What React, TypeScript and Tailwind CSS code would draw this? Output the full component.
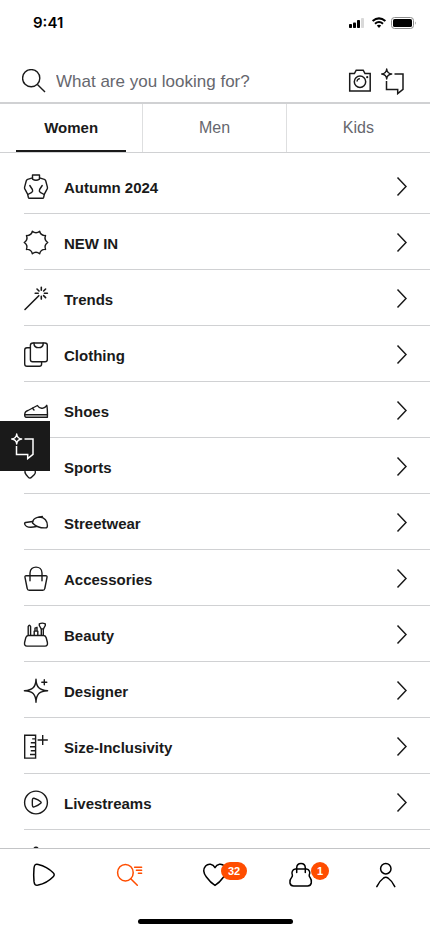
import type { ReactNode } from "react";

type IconProps = { children: ReactNode };

function RowIcon({ children }: IconProps) {
  return (
    <svg
      width="24"
      height="25"
      viewBox="0 -0.5 24 25"
      className="shrink-0 overflow-visible"
      fill="none"
      stroke="currentColor"
      strokeWidth="1.4"
      strokeLinecap="round"
      strokeLinejoin="round"
      aria-hidden="true"
    >
      {children}
    </svg>
  );
}

function NavIcon({ children }: IconProps) {
  return (
    <svg
      width="24"
      height="24"
      viewBox="0 0 24 24"
      className="overflow-visible"
      fill="none"
      stroke="currentColor"
      strokeWidth="1.5"
      strokeLinecap="round"
      strokeLinejoin="round"
      aria-hidden="true"
    >
      {children}
    </svg>
  );
}

function AssistantIcon() {
  return (
    <svg width="28" height="27" viewBox="0 0 28 27" fill="none" stroke="currentColor" strokeWidth="1.5" aria-hidden="true">
      <path d="M5.7 1C6 4.3 7.4 5.7 10.7 6C7.4 6.3 6 7.7 5.7 11C5.4 7.7 4 6.3 0.7 6C4 5.7 5.4 4.3 5.7 1Z" strokeWidth="1.4" strokeLinejoin="round" />
      <path d="M13.5 6H22V21.4L16.7 25.6V21.4H5.5V13" />
    </svg>
  );
}

const point = (radius: number, angle: number) =>
  `${(12 + radius * Math.cos(angle)).toFixed(2)} ${(12 + radius * Math.sin(angle)).toFixed(2)}`;

const sealTips = 10;

const sealPath =
  Array.from({ length: sealTips }, (_, i) => {
    const half = Math.PI / sealTips;
    const a = i * 2 * half;
    return `${i === 0 ? `M${point(11.8, a)}` : ""}Q${point(8.2, a + half)} ${point(11.8, a + half * 2)}`;
  }).join("") + "Z";

const categories: { id: string; label?: string; icon: ReactNode }[] = [
  {
    id: "autumn",
    label: "Autumn 2024",
    icon: (
      <>
        <path d="M8.5 0.5H15.5V4.6C13.5 6 10.5 6 8.5 4.6Z" />
        <path d="M8.5 3.4L3.6 4.9Q2.6 5.3 2.3 6.3L0.6 12.6Q0.4 13.6 0.8 14.4L3.6 19.6L4.4 23Q4.6 23.7 5.3 23.7H18.7Q19.4 23.7 19.6 23L20.4 19.6L23.2 14.4Q23.6 13.6 23.4 12.6L21.7 6.3Q21.4 5.3 20.4 4.9L15.5 3.4" />
        <path d="M5.8 11L8.4 15Q9.2 16.6 7.8 17.8L3.8 20M18.2 11L15.6 15Q14.8 16.6 16.2 17.8L20.2 20" />
      </>
    ),
  },
  { id: "new", label: "NEW IN", icon: <path d={sealPath} /> },
  {
    id: "trends",
    label: "Trends",
    icon: (
      <path
        strokeWidth="1.6"
        d="M1 23L14.8 9.2M17.3 0.8V3.8M17.3 9.8V12.6M11.2 6.8H14.2M20.4 6.8H23.4M13 2.5L15 4.5M21.6 2.5L19.6 4.5M21.6 11.1L19.6 9.1"
      />
    ),
  },
  {
    id: "clothing",
    label: "Clothing",
    icon: (
      <>
        <path d="M9 0.5H21Q23.3 0.5 23.3 2.8V17Q23.3 19.2 21 19.2H8.6Q6.4 19.2 6.4 17V2.8Q6.4 0.5 9 0.5Z" />
        <path d="M10 0.5V1.4C10.3 6.4 18.9 6.4 19.2 1.4V0.5" />
        <path d="M6.4 5.3H3Q0.7 5.3 0.7 7.6V21.6Q0.7 23.8 3 23.8H15.4Q17.6 23.8 17.6 21.6V19.2" />
      </>
    ),
  },
  {
    id: "shoes",
    label: "Shoes",
    icon: (
      <>
        <path d="M0.7 16.2C0.7 13.5 1.8 12.6 4 12L13.4 7Q15.6 10.6 19 9.6Q21.7 9 22.8 6.8Q23.6 10.5 23.4 18.8H2.2Q0.7 18.8 0.7 16.2Z" />
        <path d="M0.9 16.2H23.4M8.5 9.8L10 11.4" />
      </>
    ),
  },
  {
    id: "sports",
    label: "Sports",
    icon: <path d="M12 1L1 15.5Q0.5 18.5 2 20L4.2 22.6Q5.9 24.6 7.8 22.6L10.4 20Q11.8 18.4 11.2 15.5L23 4" />,
  },
  {
    id: "streetwear",
    label: "Streetwear",
    icon: (
      <>
        <path d="M8.8 10.8C10 7.6 13 6.6 16 6.6C20.5 6.8 23.5 10.4 23.4 15.2Q23.4 17.4 21.4 17.4C15.5 17.6 12.2 16.2 8.5 12.4Z" />
        <path d="M8.7 11L1.6 12Q0.3 12.4 0.7 13.6C1.8 16.8 4.5 17.8 12.5 16M14.8 6.6L18.4 5.9" />
      </>
    ),
  },
  {
    id: "accessories",
    label: "Accessories",
    icon: (
      <>
        <path d="M2.2 9.2H21.8Q23.3 9.2 23 10.8L20.8 22Q20.5 23.8 18.8 23.8H5.2Q3.5 23.8 3.2 22L1 10.8Q0.7 9.2 2.2 9.2Z" />
        <path d="M6 14.3V6.6C6 -1.4 18 -1.4 18 6.6V14.3" />
      </>
    ),
  },
  {
    id: "beauty",
    label: "Beauty",
    icon: (
      <>
        <path d="M4.4 13H19.6Q21.6 13 22.2 15.2L23.4 20Q24 23.6 21 23.6H3Q0 23.6 0.6 20L1.8 15.2Q2.4 13 4.4 13Z" />
        <path d="M4.2 12.8V4Q5.4 1.4 6.6 4V12.8M10.2 12.8V8.6H13.8V12.8M11 8.4V5.6L13 4.8V8.4M17.3 12.8V6.6L15.3 3V1.4Q18.3 -0.2 21.3 1.4V3L19.3 6.6V12.8M17 6.4H19.6" />
      </>
    ),
  },
  {
    id: "designer",
    label: "Designer",
    icon: (
      <>
        <path d="M12 0.6C12.3 8.8 15.4 11.9 23.6 12.2C15.4 12.5 12.3 15.6 12 23.8C11.7 15.6 8.6 12.5 0.4 12.2C8.6 11.9 11.7 8.8 12 0.6Z" />
        <path d="M20.3 1.3V6.3M17.8 3.8H22.8" />
      </>
    ),
  },
  {
    id: "size",
    label: "Size-Inclusivity",
    icon: (
      <path
        strokeLinecap="butt"
        strokeLinejoin="miter"
        d="M0.7 0.7H11.6V23.6H0.7ZM11.6 4.4H8.2M11.6 8.2H6.8M11.6 12.2H6M11.6 16.2H6.8M11.6 20H6M18.7 0.4V10.6M13.6 5.5H23.8"
      />
    ),
  },
  {
    id: "live",
    label: "Livestreams",
    icon: (
      <>
        <circle cx="12" cy="12" r="11.4" />
        <path d="M8.4 9.4C8.6 7.6 9.2 7.4 10.8 8C13.2 8.8 15 9.8 16.7 11.3Q17.6 12 16.7 12.8C15 14.4 13.2 15.4 10.8 16.2C9.2 16.8 8.6 16.4 8.4 14.8Q8.2 12 8.4 9.4Z" />
      </>
    ),
  },
  {
    id: "more",
    icon: <path d="M10 4C9 -0.4 15 -0.4 14 4M10 4L1 12V23.5H23V12L14 4" />,
  },
];

const tabs = ["Women", "Men", "Kids"];

function StatusBar() {
  return (
    <div className="flex h-[60px] shrink-0 items-start justify-between pt-3 pr-3.5 pl-[33px]">
      <span className="font-['Inter',sans-serif] text-[15px] leading-[22px] font-semibold text-black">9:41</span>
      <svg width="68" height="22" viewBox="0 0 68 22" aria-hidden="true">
        <g fill="#000">
          <rect x="1" y="12" width="3" height="4" rx="0.8" />
          <rect x="5" y="10.5" width="3" height="5.5" rx="0.8" />
          <rect x="9" y="8" width="3" height="8" rx="0.8" />
          <rect x="13" y="6" width="3" height="10" rx="0.8" opacity="0.15" />
          <path d="M31 16L28.8 13.6Q31 12 33.2 13.6Z" />
        </g>
        <path d="M24.6 9.1Q31 3.6 37.4 9.1M27 11.8Q31 8.3 35 11.8" fill="none" stroke="#000" strokeWidth="2" />
        <rect x="43.5" y="5.5" width="22" height="11" rx="3" fill="none" stroke="#8c8c8c" />
        <rect x="45" y="7" width="19" height="8" rx="1.6" fill="#000" />
        <path d="M67 9.5Q68.4 11 67 12.8Z" fill="#8c8c8c" />
      </svg>
    </div>
  );
}

function SearchBar() {
  return (
    <form role="search" className="flex h-11 shrink-0 items-center border-b-2 border-[#d0d1d3] pr-[21px] pl-[22px]">
      <label htmlFor="search" aria-label="Search">
        <svg width="24" height="24" viewBox="0 0 24 24" fill="none" stroke="currentColor" strokeWidth="1.4" aria-hidden="true">
          <circle cx="9.2" cy="9.2" r="8.6" />
          <path d="M15.4 15.4L23 23" />
        </svg>
      </label>
      <input
        id="search"
        type="search"
        placeholder="What are you looking for?"
        className="ml-2.5 h-10 min-w-0 flex-1 bg-transparent pt-0.5 text-[17px] outline-none placeholder:text-[#66676e]"
      />
      <button type="button" aria-label="Search by photo" className="shrink-0">
        <svg width="24" height="24" viewBox="0 0 24 24" fill="none" stroke="currentColor" strokeWidth="1.5" aria-hidden="true">
          <path d="M1.7 4.5H6.4L8.2 1.2H15.2L17 4.5H22.2V22H1.7Z" />
          <circle cx="12" cy="12.8" r="5.7" />
          <path d="M8.9 12.6Q9.2 9.9 11.9 9.6" strokeWidth="1.1" />
          <circle cx="19.2" cy="8.2" r="1.1" fill="currentColor" stroke="none" />
        </svg>
      </button>
      <button type="button" aria-label="Open assistant" className="ml-[9px] shrink-0">
        <AssistantIcon />
      </button>
    </form>
  );
}

function BottomNav() {
  return (
    <nav aria-label="Main" className="h-[82px] shrink-0 border-t border-[#c3c4c6] bg-white">
      <div className="grid h-[70px] grid-cols-5 items-start justify-items-center pt-3.5 text-black">
        <a href="#home" aria-label="Home">
          <NavIcon>
            <path d="M3 5C3.4 1.6 4.4 0.9 7.2 1.4C13.2 2.7 18 5.4 22.2 9.8Q24.2 11.7 22.2 13.7C18 18 13.2 20.8 7.2 22.1C4.4 22.6 3.4 21.8 3 18.4Q2.4 11.7 3 5Z" />
          </NavIcon>
        </a>
        <a href="#discover" aria-label="Discover" aria-current="page" className="text-[#ff4d00]">
          <NavIcon>
            <ellipse cx="8.4" cy="9.7" rx="7.8" ry="8.3" />
            <path d="M14 16L20.3 22.3M17.6 4.3H24.6M19.4 7.3H24.6M21.4 10.3H24.6" />
          </NavIcon>
        </a>
        <a href="#wishlist" aria-label="Wish list" className="relative">
          <NavIcon>
            <path d="M12 4.6C10 0.6 5.2 0.2 2.6 3C-0.2 6.2 0.6 10.4 3.4 14C5.6 17 8.6 20.4 12 22.4C15.4 20.4 18.4 17 20.6 14C23.4 10.4 24.2 6.2 21.4 3C18.8 0.2 14 0.6 12 4.6Z" />
          </NavIcon>
          <span className="absolute -top-px left-[18px] flex h-[18px] w-[26px] items-center justify-center rounded-full bg-[#ff4d00] text-[11px] leading-none font-bold text-white">
            32
          </span>
        </a>
        <a href="#bag" aria-label="Bag" className="relative">
          <NavIcon>
            <path d="M6.4 6H17.4C20.4 6.4 21.6 9.4 20.2 12.2C20 13.4 20.4 13.8 21.2 14.8C23.4 17.8 22.8 22.9 18.6 22.9H4.6C0.4 22.9 -0.2 17.8 2.4 14.8C3.2 13.8 3.6 13.4 3.4 12.2C2.2 9.4 3.4 6.4 6.4 6Z" />
            <path d="M7.7 9.4V4.8C7.9 -1 16.1 -1 16.3 4.8V9.4" />
          </NavIcon>
          <span className="absolute -top-px left-[22px] flex size-[18px] items-center justify-center rounded-full bg-[#ff4d00] text-[11px] leading-none font-bold text-white">
            1
          </span>
        </a>
        <a href="#profile" aria-label="Profile">
          <NavIcon>
            <circle cx="10.8" cy="5.7" r="5.2" />
            <path d="M1.8 23.6Q4.4 18 8.6 15Q10.8 13.6 13 15Q17.2 18 19.8 23.6" />
          </NavIcon>
        </a>
      </div>
      <div className="mx-auto h-[5px] w-[155px] rounded-full bg-black" />
    </nav>
  );
}

export default function App() {
  return (
    <div className="relative flex h-screen flex-col overflow-hidden bg-white font-['Liberation_Sans',Arial,sans-serif] text-[#1a1a1a]">
      <StatusBar />
      <SearchBar />
      <div role="tablist" aria-label="Department" className="grid h-[49px] shrink-0 grid-cols-3 border-b border-[#d0d1d3]">
        {tabs.map((tab, i) => (
          <button
            key={tab}
            type="button"
            role="tab"
            aria-selected={i === 0}
            className={
              i === 0
                ? "flex border-r border-[#dedfe0] px-4 text-[15px] font-bold text-[#1a1a1a]"
                : "flex border-r border-[#dedfe0] px-4 text-base text-[#66676e] last:border-r-0"
            }
          >
            <span
              className={
                i === 0
                  ? "flex-1 border-b-2 border-[#1a1a1a] pt-0.5 leading-[44px]"
                  : "flex-1 border-b-2 border-transparent pt-0.5 leading-[44px]"
              }
            >
              {tab}
            </span>
          </button>
        ))}
      </div>
      <main className="min-h-0 flex-1 overflow-y-auto pt-[5px] [scrollbar-width:none]">
        <ul className="pl-6">
          {categories.map(({ id, label, icon }) => (
            <li key={id} className="border-b border-[#d0d1d3]">
              <a href={`#${id}`} className="flex h-[55px] items-center pt-0.5 pr-[23px]">
                <RowIcon>{icon}</RowIcon>
                {label && <span className="ml-4 flex-1 pt-0.5 text-[15px] leading-5 font-bold">{label}</span>}
                {label && (
                  <svg width="11" height="21" viewBox="0 0 11 21" fill="none" stroke="currentColor" strokeWidth="1.5" aria-hidden="true">
                    <path d="M1.5 1.5L10 10.5L1.5 19.5" />
                  </svg>
                )}
              </a>
            </li>
          ))}
        </ul>
      </main>
      <BottomNav />
      <button
        type="button"
        aria-label="Ask the assistant"
        className="absolute top-[421px] left-0 flex size-[50px] items-center justify-center bg-[#1a1a1a] text-white"
      >
        <AssistantIcon />
      </button>
    </div>
  );
}
